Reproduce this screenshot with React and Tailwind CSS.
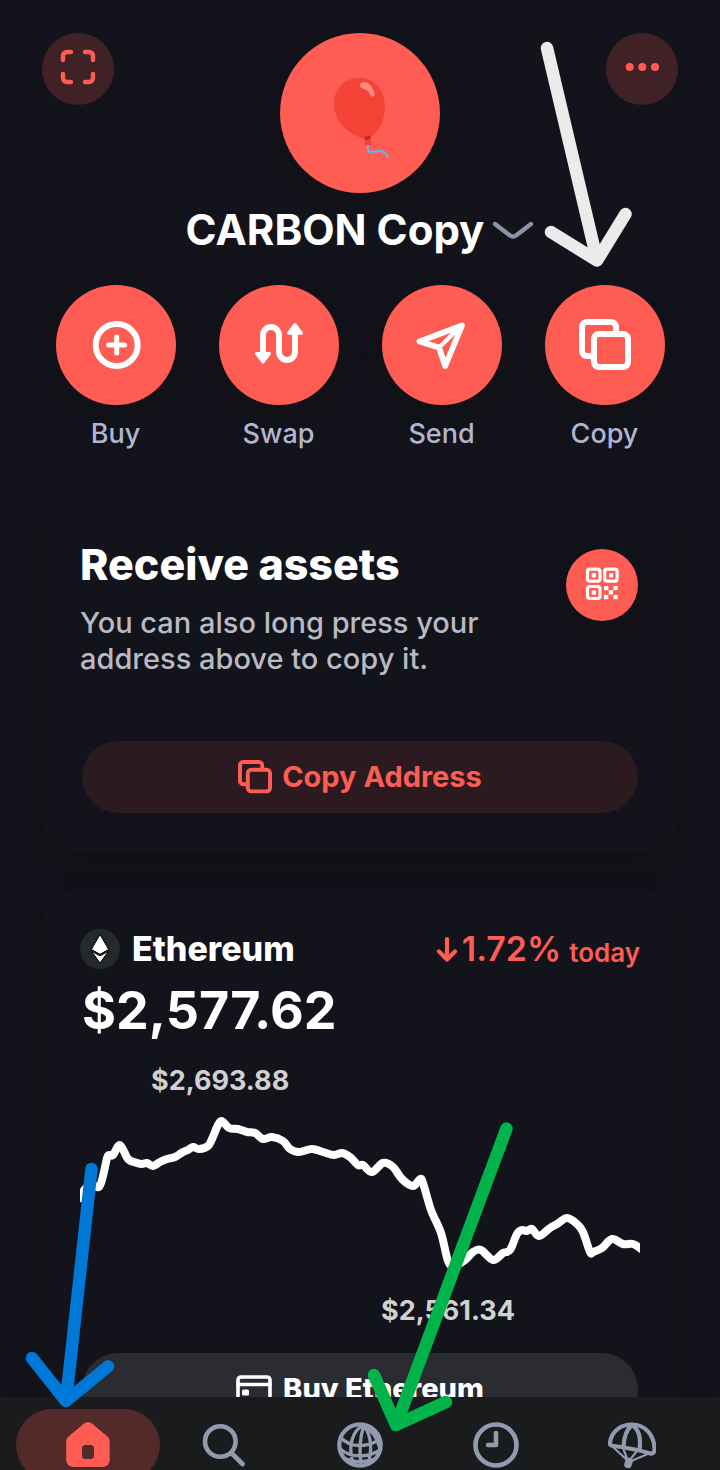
import React from "react";

const CHART = [
  [80, 1198], [85, 1189], [92, 1185], [99, 1187], [103, 1176], [107, 1158], [109, 1155], [113, 1155], [120, 1145],
  [128, 1159], [137, 1163], [142, 1164], [147, 1163], [153, 1166], [160, 1162], [167, 1159], [175, 1157], [183, 1152],
  [188, 1150], [193, 1147], [199, 1149], [208, 1146], [212, 1139], [218, 1125], [222, 1121], [229, 1128], [238, 1129],
  [247, 1132], [255, 1133], [263, 1139], [272, 1137], [283, 1141], [290, 1149], [299, 1152], [312, 1149], [323, 1152],
  [334, 1155], [342, 1153], [350, 1157], [358, 1165], [363, 1165], [372, 1172], [383, 1163], [393, 1167], [402, 1179],
  [413, 1186], [420, 1179], [423, 1183], [431, 1210], [441, 1233], [448, 1261], [454, 1266], [465, 1260], [473, 1252],
  [481, 1250], [493, 1260], [503, 1253], [510, 1250], [517, 1234], [522, 1230], [527, 1231], [532, 1229], [539, 1236],
  [550, 1228], [557, 1224], [567, 1218], [577, 1224], [583, 1232], [590, 1252], [593, 1252], [602, 1248], [612, 1239],
  [623, 1244], [633, 1244], [641, 1249],
];

function smoothPath(points) {
  let d = `M${points[0][0]} ${points[0][1]}`;
  for (let i = 0; i < points.length - 1; i++) {
    const a = points[i - 1] || points[i];
    const b = points[i];
    const c = points[i + 1];
    const e = points[i + 2] || c;
    d += ` C${b[0] + (c[0] - a[0]) / 6} ${b[1] + (c[1] - a[1]) / 6} ${c[0] - (e[0] - b[0]) / 6} ${c[1] - (e[1] - b[1]) / 6} ${c[0]} ${c[1]}`;
  }
  return d;
}

const line = { fill: "none", stroke: "currentColor", strokeLinecap: "round", strokeLinejoin: "round" };

function CopyIcon({ className }) {
  return (
    <svg className={className} viewBox="34 34 52 52" {...line} strokeWidth="6" aria-hidden="true">
      <rect x="49" y="49" width="34" height="33" rx="5" />
      <path d="M71 46V42a5 5 0 0 0-5-5H42a5 5 0 0 0-5 5v24a5 5 0 0 0 5 5h4" />
    </svg>
  );
}

function BuyIcon() {
  return (
    <svg className="size-[120px]" viewBox="0 0 120 120" {...line} aria-hidden="true">
      <circle cx="60.7" cy="60" r="21" strokeWidth="6" />
      <path d="M60.7 52v16M52.7 60h16" strokeWidth="5" />
    </svg>
  );
}

function SwapIcon() {
  return (
    <svg className="size-[120px]" viewBox="0 0 120 120" {...line} aria-hidden="true">
      <path d="M44 68V50a8 8 0 0 1 16 0v17a8 8 0 0 0 16 0V48" strokeWidth="5.8" />
      <path d="M37.5 68.5h13L44 77.2zM69.5 48.2h13L76 39.5z" fill="currentColor" strokeWidth="3" />
    </svg>
  );
}

function SendIcon() {
  return (
    <svg className="size-[120px]" viewBox="0 0 120 120" {...line} aria-hidden="true">
      <path d="M80 40.5 37.5 56.5 57 62.5 63.2 81z" strokeWidth="5.8" />
      <path d="M57 62.5 78 42" strokeWidth="4.4" />
    </svg>
  );
}

const ACTIONS = [
  ["Buy", <BuyIcon />],
  ["Swap", <SwapIcon />],
  ["Send", <SendIcon />],
  ["Copy", <CopyIcon className="size-[52px]" />],
];

function Balloon() {
  return (
    <svg className="size-40" viewBox="0 0 160 160" aria-hidden="true">
      <path d="M88 112c-1 7 1 8 7 6.5s9-1 13 5" fill="none" stroke="#6fb0f0" strokeWidth="2.2" strokeLinecap="round" />
      <path d="M84.5 109l3-4 4 3.5.5 3c-2 1-5 1-7 .5z" fill="#f44336" />
      <path d="M79 45c15 0 26 11 26 29 0 13-6 25-16 31-3 1-8 0-12-2C63 97 54 85 54 71c0-15 10-26 25-26z" fill="#f44336" />
      <path d="M84 104l6.500-1.500.500 3.500-6 1.500z" fill="#c62828" />
      <path d="M80 52c1-4 6-3.500 9-1s6 8 5.500 11c-.5 2.500-3.500 2-4.500-.5-1.500-4-3-4-6-5.500-2.500-1-4.500-2-4-4z" fill="#ff8a80" />
    </svg>
  );
}

function QrIcon() {
  return (
    <svg className="size-[72px]" viewBox="0 0 72 72" aria-hidden="true">
      <g fill="none" stroke="currentColor" strokeWidth="3.2">
        <rect x="21.5" y="20.2" width="12.5" height="12" rx="2.5" />
        <rect x="38.7" y="20.2" width="12.5" height="12" rx="2.5" />
        <rect x="21.5" y="37.5" width="12.5" height="12" rx="2.5" />
      </g>
      <g fill="currentColor">
        <rect x="25.7" y="24.2" width="4.2" height="4.2" />
        <rect x="43" y="24.2" width="4.2" height="4.2" />
        <rect x="25.7" y="41.5" width="4.2" height="4.2" />
        <rect x="38" y="37" width="4.3" height="4.2" />
        <rect x="47.4" y="37" width="4.3" height="4.2" />
        <rect x="42.7" y="41.2" width="4.3" height="4.3" />
        <rect x="38" y="46" width="4.3" height="4.2" />
        <rect x="47.4" y="46" width="4.3" height="4.2" />
      </g>
    </svg>
  );
}

const TABS = [
  ["Home",
    <svg className="size-12" viewBox="0 0 48 48" aria-hidden="true">
      <path fill="#ff5c54" fillRule="evenodd" d="M20 2.500c2.500-2 5.500-2 8 0l14.500 12.200c2 1.600 3.200 3.300 3.200 6v17.800c0 4.500-3 7.500-7.500 7.500H9.700c-4.500 0-7.500-3-7.500-7.500V20.700c0-2.700 1.200-4.400 3.200-6zM21.500 24a3.500 3.500 0 0 0-3.500 3.500v7a3.500 3.500 0 0 0 3.500 3.500h5a3.500 3.500 0 0 0 3.500-3.500v-7a3.500 3.500 0 0 0-3.500-3.500z" />
    </svg>],
  ["Search",
    <svg className="size-12" viewBox="0 0 48 48" {...line} aria-hidden="true">
      <circle cx="20.3" cy="20.5" r="15.3" strokeWidth="4.6" />
      <path d="m31.500 32 11 11" strokeWidth="4.8" />
    </svg>],
  ["Browser",
    <svg className="size-12" viewBox="0 0 48 48" {...line} strokeWidth="3.4" aria-hidden="true">
      <circle cx="24" cy="24" r="20.7" strokeWidth="4.2" />
      <path d="M28 4C16 9 11 27 18 44M28 4c-4 12-5 26-3 40M28 4c9 6 14 14 16 24M5 17c8 8 22 11 38 2M4 28c11 9 28 9 40 1M10 38c8 4 20 3 29 0M28 5c8 10 8 25 4 38" />
    </svg>],
  ["Activity",
    <svg className="size-12" viewBox="0 0 48 48" {...line} aria-hidden="true">
      <circle cx="24" cy="24" r="20.5" strokeWidth="4.6" />
      <path d="M24 12v12h-8" strokeWidth="4.6" />
    </svg>],
  ["Airdrops",
    <svg className="size-12" viewBox="0 0 48 48" {...line} aria-hidden="true">
      <path d="M2 21C4 10 13 3.500 24 3.500c13 0 22 10.500 22.500 24 .2 4.500-2.500 6-6 4.500-7-2.500-25-6-35-7-3-.3-4-1.500-3.500-4z" strokeWidth="4.2" />
      <path d="M24 4c-5 4-8 12-8.500 21.500M24 4c8 5 9 14 7.500 25" strokeWidth="4.2" />
      <path d="M5 26l15 14M15 27l5 13M29 30l-8 10M42 32 21 41" strokeWidth="2.2" />
      <path d="M21 40.500l-1 3" strokeWidth="7.5" />
    </svg>],
];

export default function App() {
  return (
    <div className="relative flex h-screen flex-col overflow-hidden bg-[#12131b] font-['Inter','Noto_Sans',sans-serif] text-white">
      <main className="min-h-0 flex-1 overflow-y-auto [scrollbar-width:none]">
        <header className="flex items-start justify-between px-[42px] pt-[33px]">
          <button aria-label="Scan" className="size-[72px] rounded-full bg-[#402226] text-[#ff5c54]">
            <svg className="size-[72px]" viewBox="0 0 72 72" {...line} strokeWidth="4.4" aria-hidden="true">
              <path d="M21 27v-4a4 4 0 0 1 4-4h4M43 19h4a4 4 0 0 1 4 4v4M51 41v4a4 4 0 0 1-4 4h-4M29 49h-4a4 4 0 0 1-4-4v-4" />
            </svg>
          </button>
          <button aria-label="Wallet avatar" className="size-40 rounded-full bg-[#ff5c54] shadow-[0_8px_24px_#111215]">
            <Balloon />
          </button>
          <button aria-label="More" className="size-[72px] rounded-full bg-[#402226] text-[#ff5c54]">
            <svg className="size-[72px]" viewBox="0 0 72 72" fill="currentColor" aria-hidden="true">
              <circle cx="23.7" cy="34" r="4" />
              <circle cx="36.3" cy="34" r="4" />
              <circle cx="49" cy="34" r="4" />
            </svg>
          </button>
        </header>

        <h1 className="mt-[11px] flex justify-center text-[42px] leading-[52px] font-bold">
          <button className="flex items-center gap-2">
            CARBON Copy
            <svg className="h-5 w-[42px]" viewBox="0 0 42 20" {...line} stroke="#8e92a6" strokeWidth="4.4" aria-hidden="true">
              <path d="m3 4 15 11.500q3 2 6 0L39 4" />
            </svg>
          </button>
        </h1>

        <div className="mt-[29px] flex justify-center gap-[43px]">
          {ACTIONS.map(([label, icon]) => (
            <button key={label} className="flex flex-col items-center gap-3 text-[27px] leading-[34px] font-medium text-[#b1b6d0]">
              <span className="flex size-[120px] items-center justify-center rounded-full bg-[#ff5c54] text-white shadow-[0_8px_24px_#111215]">
                {icon}
              </span>
              {label}
            </button>
          ))}
        </div>

        <section className="mx-10 mt-[58px] rounded-[40px] bg-[#12131b] p-10 shadow-[0_12px_24px_#111215]">
          <div className="flex items-start justify-between">
            <div>
              <h2 className="text-[43px] leading-[30px] font-extrabold">Receive assets</h2>
              <p className="mt-[26px] max-w-[420px] text-[29px] leading-9 font-medium text-[#b9bac3]">
                You can also long press your address above to copy it.
              </p>
            </div>
            <button aria-label="Show QR code" className="mr-0.5 size-[72px] rounded-full bg-[#ff5c54] shadow-[0_8px_24px_#111215]">
              <QrIcon />
            </button>
          </div>
          <div className="mt-16 px-0.5">
            <button className="flex h-[72px] w-full items-center justify-center gap-2.5 rounded-full bg-[#2b1a1f] text-[29px] leading-9 font-bold text-[#ff5c54]">
              <CopyIcon className="size-[34px]" />
              Copy Address
            </button>
          </div>
        </section>

        <section className="mx-10 mt-9 rounded-[40px] bg-[#12131b] p-10 shadow-[0_12px_24px_#111215]">
          <div className="flex h-10 items-center justify-between">
            <div className="flex items-center gap-3">
              <svg className="size-10" viewBox="0 0 40 40" aria-hidden="true">
                <circle cx="20" cy="20" r="20" fill="#25282c" />
                <g stroke="#000" strokeWidth="1" strokeLinejoin="round" fill="#fff">
                  <path d="M20 5.500 28.700 20.500 20 25.300 11.300 20.500z" />
                  <path d="M11.300 22 20 26.800 28.700 22 20 34z" fill="#f0f0f0" />
                </g>
              </svg>
              <h2 className="text-[34px] leading-10 font-extrabold">Ethereum</h2>
            </div>
            <p className="flex items-end text-[34px] leading-10 font-semibold text-[#ff5c54]">
              <svg className="mr-1 h-[26px] w-[22px] self-center" viewBox="0 0 22 26" {...line} strokeWidth="4.2" aria-hidden="true">
                <path d="M11 3v20M3 15.500l8 8 8-8" />
              </svg>
              1.72%
              <span className="ml-2 text-[26px] leading-8">today</span>
            </p>
          </div>
          <p className="mt-3 px-0.5 text-[52px] leading-[60px] font-bold">$2,577.62</p>
          <p className="mt-6 pl-[71px] text-[27px] leading-8 font-bold text-[#d1d1d1]">$2,693.88</p>
          <svg className="block h-[198px] w-full overflow-hidden" viewBox="80 1097 560 198" preserveAspectRatio="none" role="img" aria-label="Ethereum price today">
            <path d={smoothPath(CHART)} {...line} strokeWidth="8" />
          </svg>
          <p className="pl-[301px] text-[27px] leading-8 font-bold text-[#d1d1d1]">$2,561.34</p>
          <div className="mt-[26px] px-0.5">
            <button className="flex h-[72px] w-full items-center justify-center gap-[11px] rounded-full bg-[#2b2c31] text-[29px] leading-9 font-extrabold">
              <svg className="h-7 w-9" viewBox="0 0 36 28" {...line} strokeWidth="3.6" aria-hidden="true">
                <rect x="2" y="2" width="32" height="24" rx="3" />
                <path d="M2 9.500h32" />
                <rect x="7.5" y="16" width="4" height="3" fill="currentColor" strokeWidth="3" />
              </svg>
              Buy Ethereum
            </button>
          </div>
        </section>
      </main>

      <nav className="grid h-[73px] shrink-0 grid-cols-5 justify-items-center overflow-hidden bg-[#1a1b1d] px-5 pt-3 text-[#929bad]">
        {TABS.map(([label, icon]) => (
          <button
            key={label}
            aria-label={label}
            className={`flex h-[72px] w-36 items-center justify-center rounded-full ${label === "Home" ? "bg-[#532a2a]" : ""}`}
          >
            {icon}
          </button>
        ))}
      </nav>

      <svg className="pointer-events-none absolute inset-0 h-full w-full" viewBox="0 0 720 1470" {...line} strokeWidth="12.5" aria-hidden="true">
        <path stroke="#ebebeb" d="M547 48 597 260M551 232 597 260.500 625.500 214" />
        <path stroke="#0078d7" d="M91.500 1169 66 1401M32 1358 66 1401 108 1366.500" />
        <path stroke="#00b44b" d="M506.500 1128.500 396 1425M374 1375 396 1425 446 1402" />
      </svg>
    </div>
  );
}
